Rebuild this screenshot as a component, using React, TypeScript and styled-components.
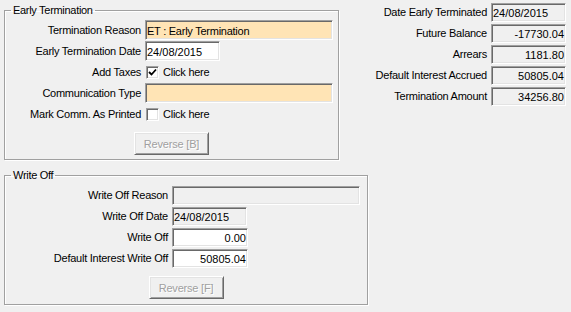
import React from "react";
import styled, { createGlobalStyle } from "styled-components";

const GlobalStyle = createGlobalStyle`
  html, body {
    margin: 0;
    padding: 0;
    background: #f0f0f0;
  }
  body {
    font-family: "Liberation Sans", Arial, sans-serif;
    font-size: 11px;
    color: #000;
  }
  * { box-sizing: border-box; }
`;

const Page = styled.div`
  width: 571px;
  height: 312px;
  display: flex;
  justify-content: space-between;
  align-items: flex-start;
  padding: 0 5px 0 4px;
  background: #f0f0f0;
`;

const LeftColumn = styled.div`
  display: flex;
  flex-direction: column;
  align-items: flex-start;
  gap: 9px;
  padding-top: 4px;
`;

const GroupBox = styled.fieldset<{ $w: number; $pt: number; $pb: number }>`
  width: ${(p) => p.$w}px;
  margin: 0;
  padding: ${(p) => p.$pt}px 0 ${(p) => p.$pb}px 0;
  border: 1px solid #a0a0a0;
  box-shadow: inset 1px 1px 0 #fff, 1px 1px 0 #fff;
  min-width: 0;
`;

const Legend = styled.legend`
  margin-left: 6px;
  padding: 0 2px;
  line-height: 13px;
  height: 13px;
  font-size: 11px;
  letter-spacing: -0.3px;
`;

const FormGrid = styled.div<{ $label: number; $row: number; $gap: number }>`
  display: grid;
  grid-template-columns: ${(p) => p.$label}px auto;
  grid-auto-rows: ${(p) => p.$row}px;
  column-gap: 4px;
  row-gap: ${(p) => p.$gap}px;
  align-items: center;
  justify-items: start;
`;

const Label = styled.span`
  justify-self: end;
  white-space: nowrap;
  line-height: 13px;
  letter-spacing: -0.25px;
`;

const Field = styled.div<{ $w: number; $bg: string; $right?: boolean; $tight?: boolean }>`
  width: ${(p) => p.$w}px;
  height: 100%;
  display: flex;
  align-items: center;
  justify-content: ${(p) => (p.$right ? "flex-end" : "flex-start")};
  padding: 1px 1px 0 1px;
  background: ${(p) => p.$bg};
  border-top: 1px solid #a0a0a0;
  border-left: 1px solid #a0a0a0;
  border-bottom: 1px solid #fff;
  border-right: 1px solid #fff;
  box-shadow: inset 1px 1px 0 #696969, inset -1px -1px 0 #e3e3e3;
  white-space: nowrap;
  overflow: hidden;
  font-size: 11px;
  letter-spacing: ${(p) => (p.$tight ? "-0.25px" : "0")};
`;

const CheckRow = styled.label`
  display: flex;
  align-items: center;
  gap: 4px;
  margin-left: 1px;
  white-space: nowrap;
  letter-spacing: -0.25px;
`;

const CheckBox = styled.span`
  width: 13px;
  height: 13px;
  display: inline-flex;
  align-items: center;
  justify-content: center;
  background: #fff;
  border-top: 1px solid #a0a0a0;
  border-left: 1px solid #a0a0a0;
  border-bottom: 1px solid #fff;
  border-right: 1px solid #fff;
  box-shadow: inset 1px 1px 0 #696969, inset -1px -1px 0 #e3e3e3;
`;

const ButtonRow = styled.div<{ $mt: number }>`
  display: flex;
  justify-content: center;
  margin-top: ${(p) => p.$mt}px;
`;

const Button = styled.button`
  width: 75px;
  height: 23px;
  margin: 0;
  padding: 0;
  font-family: "Liberation Sans", Arial, sans-serif;
  font-size: 11px;
  letter-spacing: -0.2px;
  color: #a0a0a0;
  text-shadow: 1px 1px 0 #fff;
  background: #f0f0f0;
  border-top: 1px solid #fff;
  border-left: 1px solid #fff;
  border-bottom: 1px solid #696969;
  border-right: 1px solid #696969;
  box-shadow: inset 1px 1px 0 #e3e3e3, inset -1px -1px 0 #a0a0a0;
`;

const SidePanel = styled.div`
  display: grid;
  grid-template-columns: auto 75px;
  grid-auto-rows: 19px;
  column-gap: 4px;
  row-gap: 2px;
  align-items: center;
  padding-top: 3px;
`;

const Check = () => (
  <svg width="9" height="9" viewBox="0 0 9 9">
    <path d="M1 4 L3.5 6.5 L8 1.5" stroke="#000" strokeWidth="1.8" fill="none" />
  </svg>
);

const PEACH = "#ffe4b5";
const WHITE = "#ffffff";
const FACE = "#f0f0f0";

const sideRows: [string, string, boolean][] = [
  ["Date Early Terminated", "24/08/2015", false],
  ["Future Balance", "-17730.04", true],
  ["Arrears", "1181.80", true],
  ["Default Interest Accrued", "50805.04", true],
  ["Termination Amount", "34256.80", true],
];

export default function App() {
  return (
    <>
      <GlobalStyle />
      <Page>
        <LeftColumn>
          <GroupBox $w={335} $pt={3} $pb={4}>
            <Legend>Early Termination</Legend>
            <FormGrid $label={136} $row={20} $gap={1}>
              <Label>Termination Reason</Label>
              <Field $w={188} $bg={PEACH} $tight>ET : Early Termination</Field>
              <Label>Early Termination Date</Label>
              <Field $w={75} $bg={WHITE}>24/08/2015</Field>
              <Label>Add Taxes</Label>
              <CheckRow>
                <CheckBox>
                  <Check />
                </CheckBox>
                Click here
              </CheckRow>
              <Label>Communication Type</Label>
              <Field $w={188} $bg={PEACH} />
              <Label>Mark Comm. As Printed</Label>
              <CheckRow>
                <CheckBox />
                Click here
              </CheckRow>
            </FormGrid>
            <ButtonRow $mt={8}>
              <Button disabled>Reverse [B]</Button>
            </ButtonRow>
          </GroupBox>
          <GroupBox $w={364} $pt={4} $pb={5}>
            <Legend>Write Off</Legend>
            <FormGrid $label={163} $row={19} $gap={2}>
              <Label>Write Off Reason</Label>
              <Field $w={188} $bg={FACE} />
              <Label>Write Off Date</Label>
              <Field $w={75} $bg={FACE}>24/08/2015</Field>
              <Label>Write Off</Label>
              <Field $w={76} $bg={WHITE} $right>0.00</Field>
              <Label>Default Interest Write Off</Label>
              <Field $w={76} $bg={WHITE} $right>50805.04</Field>
            </FormGrid>
            <ButtonRow $mt={8}>
              <Button disabled>Reverse [F]</Button>
            </ButtonRow>
          </GroupBox>
        </LeftColumn>
        <SidePanel>
          {sideRows.map(([label, value, right]) => (
            <React.Fragment key={label}>
              <Label>{label}</Label>
              <Field $w={75} $bg={FACE} $right={right}>
                {value}
              </Field>
            </React.Fragment>
          ))}
        </SidePanel>
      </Page>
    </>
  );
}
